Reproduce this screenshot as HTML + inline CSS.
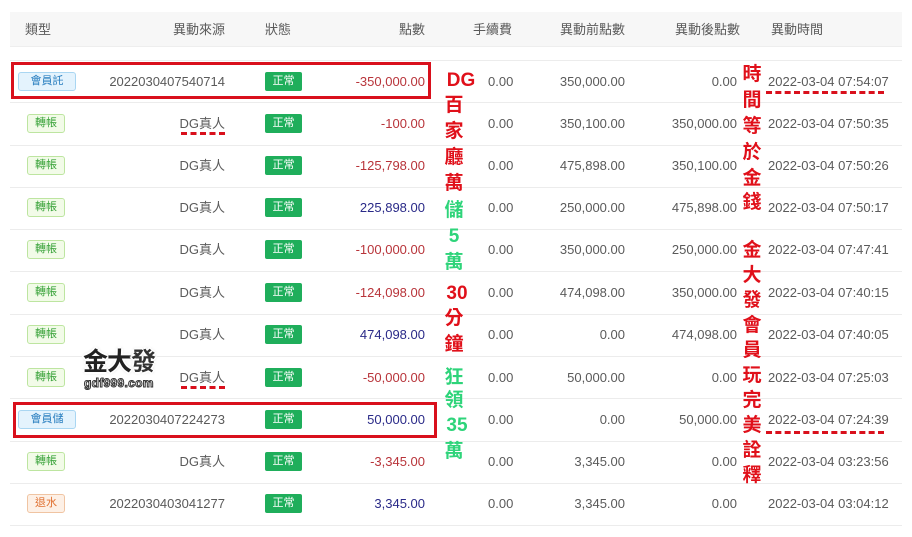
<!DOCTYPE html>
<html><head><meta charset="utf-8"><style>
body{margin:0;width:912px;height:537px;background:#fff;position:relative;overflow:hidden;font-family:"Liberation Sans","Noto Sans CJK TC",sans-serif;font-size:13px;color:#5a5a5a}
.a{position:absolute;white-space:nowrap;line-height:16px}
.hd{position:absolute;left:10px;top:12px;width:892px;height:34px;background:#f7f7f7;border-bottom:1px solid #eee}
.ln{position:absolute;left:10px;width:892px;height:1px;background:#ececec}
.r{position:absolute;left:0;width:912px;height:20px}
.r .a{top:2px}
.tb{position:absolute;top:0;height:17px;line-height:17px;font-size:11px;text-align:center;border:1px solid;border-radius:3px}
.ok{position:absolute;left:265px;top:0;width:37px;height:19px;line-height:19px;background:#1fae5b;color:#fff;font-size:11px;text-align:center;border-radius:2px}
.neg{color:#b8343a}.pos{color:#2a2a88}
.an{position:absolute;font-weight:bold;font-size:19px;line-height:19px;text-align:center;width:34px}
.red{color:#e0101a}.grn{color:#2ed47a}
.box{position:absolute;border:3px solid #d9101c}
.dash{position:absolute;height:0;border-top:3px dashed #d9101c}
</style></head><body>
<div class="hd"></div>
<div class="a" style="left:25px;top:22px">類型</div>
<div class="a" style="right:687px;top:22px">異動來源</div>
<div class="a" style="left:265px;top:22px">狀態</div>
<div class="a" style="right:487px;top:22px">點數</div>
<div class="a" style="left:473px;top:22px">手續費</div>
<div class="a" style="right:287px;top:22px">異動前點數</div>
<div class="a" style="right:172px;top:22px">異動後點數</div>
<div class="a" style="left:771px;top:22px">異動時間</div>

<div class="ln" style="top:60px"></div><div class="ln" style="top:102px"></div><div class="ln" style="top:145px"></div><div class="ln" style="top:187px"></div><div class="ln" style="top:229px"></div><div class="ln" style="top:271px"></div><div class="ln" style="top:314px"></div><div class="ln" style="top:356px"></div><div class="ln" style="top:398px"></div><div class="ln" style="top:441px"></div><div class="ln" style="top:483px"></div><div class="ln" style="top:525px"></div>

<div class="r" style="top:72px"><div class="tb" style="left:18px;width:56px;background:#e4f3fd;border-color:#a9d6f2;color:#2a7fc0">會員託</div><div class="a" style="right:687px">2022030407540714</div><div class="ok">正常</div><div class="a neg" style="right:487px">-350,000.00</div><div class="a" style="left:488px">0.00</div><div class="a" style="right:287px">350,000.00</div><div class="a" style="right:175px">0.00</div><div class="a" style="left:768px">2022-03-04 07:54:07</div></div>
<div class="r" style="top:114px"><div class="tb" style="left:27px;width:36px;background:#f2fbe8;border-color:#bde5a0;color:#3aa33a">轉帳</div><div class="a" style="right:687px">DG真人</div><div class="ok">正常</div><div class="a neg" style="right:487px">-100.00</div><div class="a" style="left:488px">0.00</div><div class="a" style="right:287px">350,100.00</div><div class="a" style="right:175px">350,000.00</div><div class="a" style="left:768px">2022-03-04 07:50:35</div></div>
<div class="r" style="top:156px"><div class="tb" style="left:27px;width:36px;background:#f2fbe8;border-color:#bde5a0;color:#3aa33a">轉帳</div><div class="a" style="right:687px">DG真人</div><div class="ok">正常</div><div class="a neg" style="right:487px">-125,798.00</div><div class="a" style="left:488px">0.00</div><div class="a" style="right:287px">475,898.00</div><div class="a" style="right:175px">350,100.00</div><div class="a" style="left:768px">2022-03-04 07:50:26</div></div>
<div class="r" style="top:198px"><div class="tb" style="left:27px;width:36px;background:#f2fbe8;border-color:#bde5a0;color:#3aa33a">轉帳</div><div class="a" style="right:687px">DG真人</div><div class="ok">正常</div><div class="a pos" style="right:487px">225,898.00</div><div class="a" style="left:488px">0.00</div><div class="a" style="right:287px">250,000.00</div><div class="a" style="right:175px">475,898.00</div><div class="a" style="left:768px">2022-03-04 07:50:17</div></div>
<div class="r" style="top:240px"><div class="tb" style="left:27px;width:36px;background:#f2fbe8;border-color:#bde5a0;color:#3aa33a">轉帳</div><div class="a" style="right:687px">DG真人</div><div class="ok">正常</div><div class="a neg" style="right:487px">-100,000.00</div><div class="a" style="left:488px">0.00</div><div class="a" style="right:287px">350,000.00</div><div class="a" style="right:175px">250,000.00</div><div class="a" style="left:768px">2022-03-04 07:47:41</div></div>
<div class="r" style="top:283px"><div class="tb" style="left:27px;width:36px;background:#f2fbe8;border-color:#bde5a0;color:#3aa33a">轉帳</div><div class="a" style="right:687px">DG真人</div><div class="ok">正常</div><div class="a neg" style="right:487px">-124,098.00</div><div class="a" style="left:488px">0.00</div><div class="a" style="right:287px">474,098.00</div><div class="a" style="right:175px">350,000.00</div><div class="a" style="left:768px">2022-03-04 07:40:15</div></div>
<div class="r" style="top:325px"><div class="tb" style="left:27px;width:36px;background:#f2fbe8;border-color:#bde5a0;color:#3aa33a">轉帳</div><div class="a" style="right:687px">DG真人</div><div class="ok">正常</div><div class="a pos" style="right:487px">474,098.00</div><div class="a" style="left:488px">0.00</div><div class="a" style="right:287px">0.00</div><div class="a" style="right:175px">474,098.00</div><div class="a" style="left:768px">2022-03-04 07:40:05</div></div>
<div class="r" style="top:368px"><div class="tb" style="left:27px;width:36px;background:#f2fbe8;border-color:#bde5a0;color:#3aa33a">轉帳</div><div class="a" style="right:687px">DG真人</div><div class="ok">正常</div><div class="a neg" style="right:487px">-50,000.00</div><div class="a" style="left:488px">0.00</div><div class="a" style="right:287px">50,000.00</div><div class="a" style="right:175px">0.00</div><div class="a" style="left:768px">2022-03-04 07:25:03</div></div>
<div class="r" style="top:410px"><div class="tb" style="left:18px;width:56px;background:#e4f3fd;border-color:#a9d6f2;color:#2a7fc0">會員儲</div><div class="a" style="right:687px">2022030407224273</div><div class="ok">正常</div><div class="a pos" style="right:487px">50,000.00</div><div class="a" style="left:488px">0.00</div><div class="a" style="right:287px">0.00</div><div class="a" style="right:175px">50,000.00</div><div class="a" style="left:768px">2022-03-04 07:24:39</div></div>
<div class="r" style="top:452px"><div class="tb" style="left:27px;width:36px;background:#f2fbe8;border-color:#bde5a0;color:#3aa33a">轉帳</div><div class="a" style="right:687px">DG真人</div><div class="ok">正常</div><div class="a neg" style="right:487px">-3,345.00</div><div class="a" style="left:488px">0.00</div><div class="a" style="right:287px">3,345.00</div><div class="a" style="right:175px">0.00</div><div class="a" style="left:768px">2022-03-04 03:23:56</div></div>
<div class="r" style="top:494px"><div class="tb" style="left:27px;width:36px;background:#fdf0e6;border-color:#f0c4a2;color:#e07030">退水</div><div class="a" style="right:687px">2022030403041277</div><div class="ok">正常</div><div class="a pos" style="right:487px">3,345.00</div><div class="a" style="left:488px">0.00</div><div class="a" style="right:287px">3,345.00</div><div class="a" style="right:175px">0.00</div><div class="a" style="left:768px">2022-03-04 03:04:12</div></div>

<div class="box" style="left:11px;top:62px;width:414px;height:31px"></div>
<div class="box" style="left:13px;top:402px;width:418px;height:30px"></div>
<div class="dash" style="left:181px;top:132px;width:44px"></div>
<div class="dash" style="left:181px;top:386px;width:44px"></div>
<div class="dash" style="left:766px;top:91px;width:118px"></div>
<div class="dash" style="left:766px;top:431px;width:118px"></div>

<div class="an red" style="left:443px;top:71px;width:36px">DG</div>
<div class="an red" style="left:437px;top:96px">百</div>
<div class="an red" style="left:437px;top:122px">家</div>
<div class="an red" style="left:437px;top:148px">廳</div>
<div class="an red" style="left:437px;top:174px">萬</div>
<div class="an grn" style="left:437px;top:201px">儲</div>
<div class="an grn" style="left:437px;top:227px">5</div>
<div class="an grn" style="left:437px;top:253px">萬</div>
<div class="an red" style="left:440px;top:284px">30</div>
<div class="an red" style="left:437px;top:309px">分</div>
<div class="an red" style="left:437px;top:335px">鐘</div>
<div class="an grn" style="left:437px;top:368px">狂</div>
<div class="an grn" style="left:437px;top:391px">領</div>
<div class="an grn" style="left:440px;top:416px">35</div>
<div class="an grn" style="left:437px;top:442px">萬</div>
<div class="an red" style="left:735px;top:65px">時</div>
<div class="an red" style="left:735px;top:91px">間</div>
<div class="an red" style="left:735px;top:117px">等</div>
<div class="an red" style="left:735px;top:143px">於</div>
<div class="an red" style="left:735px;top:169px">金</div>
<div class="an red" style="left:735px;top:193px">錢</div>
<div class="an red" style="left:735px;top:241px">金</div>
<div class="an red" style="left:735px;top:266px">大</div>
<div class="an red" style="left:735px;top:291px">發</div>
<div class="an red" style="left:735px;top:316px">會</div>
<div class="an red" style="left:735px;top:341px">員</div>
<div class="an red" style="left:735px;top:366px">玩</div>
<div class="an red" style="left:735px;top:391px">完</div>
<div class="an red" style="left:735px;top:416px">美</div>
<div class="an red" style="left:735px;top:441px">詮</div>
<div class="an red" style="left:735px;top:466px">釋</div>

<div class="a" style="left:83px;top:348px;font-size:25px;line-height:28px;font-weight:bold;color:#222;letter-spacing:-1px;text-shadow:-2px 0 #fff,2px 0 #fff,0 2px #fff,0 -2px #fff,0 0 3px #aaa">金大<span style="color:#333">發</span></div>
<div class="a" style="left:84px;top:375px;font-size:12px;font-weight:bold;color:#fff;-webkit-text-stroke:1px #333;letter-spacing:0.3px">gdf999.com</div>
</body></html>
